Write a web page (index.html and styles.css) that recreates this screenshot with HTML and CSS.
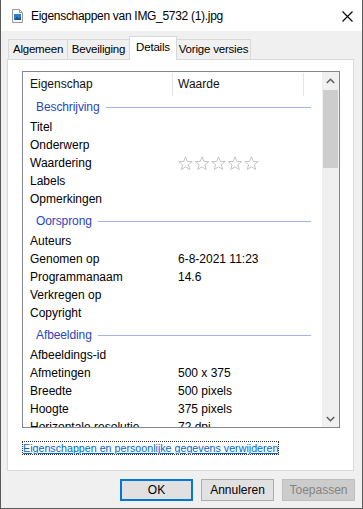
FILE: index.html
```html
<!DOCTYPE html>
<html lang="nl">
<head>
    <meta charset="UTF-8">
    <meta name="viewport" content="width=device-width, initial-scale=1.0">
    <title>Eigenschappen van IMG_5732 (1).jpg</title>
    <link rel="stylesheet" href="styles.css">
</head>
<body>
    <div class="window">
        <div class="titlebar">
            <svg class="file-icon" width="11" height="14" viewBox="0 0 11 14">
                <path d="M0.5 0.5 H7.5 L10.5 3.5 V13.5 H0.5 Z" fill="#fff" stroke="#9a9a9a"/>
                <path d="M7.5 0.5 V3.5 H10.5" fill="none" stroke="#9a9a9a"/>
                <rect x="2" y="5" width="7" height="6" fill="#2f7fd0"/>
                <path d="M2 11 L5 7.5 L7 9.5 L9 8 V11 Z" fill="#1b4f96"/>
            </svg>
            <span class="title">Eigenschappen van IMG_5732 (1).jpg</span>
            <svg class="close" width="11" height="11" viewBox="0 0 11 11">
                <path d="M0.5 0.5 L10.5 10.5 M10.5 0.5 L0.5 10.5" stroke="#000" stroke-width="1.1"/>
            </svg>
        </div>

        <div class="content">
            <div class="tabs">
                <div class="tab tab-general">Algemeen</div>
                <div class="tab tab-security">Beveiliging</div>
                <div class="tab tab-details active">Details</div>
                <div class="tab tab-versions">Vorige versies</div>
            </div>

            <div class="panel">
                <div class="list">
                    <div class="list-main">
                        <div class="list-head">
                            <div class="head-cell head-name">Eigenschap</div>
                            <div class="head-cell head-value">Waarde</div>
                        </div>

                        <div class="group"><span>Beschrijving</span></div>
                        <div class="row"><span class="name">Titel</span><span class="value"></span></div>
                        <div class="row"><span class="name">Onderwerp</span><span class="value"></span></div>
                        <div class="row">
                            <span class="name">Waardering</span>
                            <span class="value stars">
                                <svg width="84" height="15" viewBox="0 0 84 15">
                                    <defs>
                                        <path id="star" d="M7.5 0.8 L9.3 5.4 L14.2 5.6 L10.4 8.7 L11.7 13.5 L7.5 10.8 L3.3 13.5 L4.6 8.7 L0.8 5.6 L5.7 5.4 Z" fill="#fff" stroke="#c4c4c4" stroke-width="1"/>
                                    </defs>
                                    <use href="#star" x="0"/>
                                    <use href="#star" x="16.5"/>
                                    <use href="#star" x="33"/>
                                    <use href="#star" x="49.5"/>
                                    <use href="#star" x="66"/>
                                </svg>
                            </span>
                        </div>
                        <div class="row"><span class="name">Labels</span><span class="value"></span></div>
                        <div class="row"><span class="name">Opmerkingen</span><span class="value"></span></div>

                        <div class="group"><span>Oorsprong</span></div>
                        <div class="row"><span class="name">Auteurs</span><span class="value"></span></div>
                        <div class="row"><span class="name">Genomen op</span><span class="value">6-8-2021 11:23</span></div>
                        <div class="row"><span class="name">Programmanaam</span><span class="value">14.6</span></div>
                        <div class="row"><span class="name">Verkregen op</span><span class="value"></span></div>
                        <div class="row"><span class="name">Copyright</span><span class="value"></span></div>

                        <div class="group"><span>Afbeelding</span></div>
                        <div class="row"><span class="name">Afbeeldings-id</span><span class="value"></span></div>
                        <div class="row"><span class="name">Afmetingen</span><span class="value">500 x 375</span></div>
                        <div class="row"><span class="name">Breedte</span><span class="value">500 pixels</span></div>
                        <div class="row"><span class="name">Hoogte</span><span class="value">375 pixels</span></div>
                        <div class="row"><span class="name">Horizontale resolutie</span><span class="value">72 dpi</span></div>
                    </div>

                    <div class="scrollbar">
                        <div class="scroll-btn">
                            <svg width="9" height="6" viewBox="0 0 9 6"><path d="M0.8 5 L4.5 1.3 L8.2 5" fill="none" stroke="#606060" stroke-width="1.6"/></svg>
                        </div>
                        <div class="scroll-track">
                            <div class="scroll-thumb"></div>
                        </div>
                        <div class="scroll-btn">
                            <svg width="9" height="6" viewBox="0 0 9 6"><path d="M0.8 1 L4.5 4.7 L8.2 1" fill="none" stroke="#606060" stroke-width="1.6"/></svg>
                        </div>
                    </div>
                </div>

                <a class="remove-link" href="#">Eigenschappen en persoonlijke gegevens verwijderen</a>
            </div>

            <div class="buttons">
                <button class="btn default">OK</button>
                <button class="btn">Annuleren</button>
                <button class="btn" disabled>Toepassen</button>
            </div>
        </div>
    </div>
</body>
</html>
```

FILE: styles.css
```css
:root {
    --face: #f0f0f0;
    --tab-border: #d9d9d9;
    --group-blue: #2a46bd;
    --group-line: #a2b5e8;
}

* {
    margin: 0;
    padding: 0;
    box-sizing: border-box;
    font-family: 'Liberation Sans', Arial, sans-serif;
}

body {
    background: #fff;
    font-size: 12px;
    color: #000;
}

.window {
    width: 363px;
    height: 509px;
    border: 1px solid #5a5a5a;
    border-top: none;
    background: var(--face);
    overflow: hidden;
}

/* title bar */
.titlebar {
    height: 31px;
    background: #fff;
    display: flex;
    align-items: center;
    padding-left: 11px;
    padding-top: 1px;
}

.file-icon {
    flex: none;
    margin-right: 8px;
}

.title {
    flex: 1;
    font-size: 12px;
    letter-spacing: -0.3px;
    color: #000;
}

.close {
    flex: none;
    margin-right: 9px;
}

/* tabs */
.content {
    padding: 5px 8px 0 6px;
}

.tabs {
    display: flex;
    align-items: flex-end;
    height: 23px;
    padding-left: 1px;
    position: relative;
    z-index: 1;
}

.tab {
    height: 20px;
    line-height: 19px;
    text-align: center;
    background: var(--face);
    border: 1px solid var(--tab-border);
    border-bottom: none;
    color: #000;
    font-size: 11.5px;
    letter-spacing: -0.2px;
    white-space: nowrap;
}

.tab + .tab {
    margin-left: -1px;
}

.tab-general { width: 60px; }
.tab-security { width: 63px; }
.tab-versions { width: 75px; }

.tab.active {
    width: 48px;
    height: 24px;
    line-height: 20px;
    background: #fff;
    margin-bottom: -1px;
    position: relative;
    z-index: 2;
}

/* panel */
.panel {
    height: 412px;
    background: #fff;
    border: 1px solid var(--tab-border);
    padding: 11px 0 0 14px;
}

.list {
    width: 318px;
    height: 357px;
    border: 1px solid #828790;
    display: flex;
    overflow: hidden;
}

.list-main {
    flex: 1;
    overflow: hidden;
}

.list-head {
    display: flex;
    height: 24px;
}

.head-cell {
    border-right: 1px solid #e5e5e5;
    height: 23px;
    margin-top: 1px;
    line-height: 22px;
    color: #111;
}

.head-name {
    width: 150px;
    padding-left: 7px;
}

.head-value {
    width: 131px;
    padding-left: 5px;
}

.group {
    height: 22px;
    display: flex;
    align-items: center;
    padding: 0 11px 0 13px;
    color: var(--group-blue);
    font-size: 12px;
    letter-spacing: -0.1px;
}

.row + .group {
    height: 24px;
    padding-top: 2px;
}

.group::after {
    content: '';
    flex: 1;
    height: 1px;
    margin-left: 6px;
    margin-top: 1px;
    background: var(--group-line);
}

.row {
    display: flex;
    height: 18px;
    align-items: center;
    white-space: nowrap;
}

.name {
    width: 155px;
    padding-left: 7px;
    flex: none;
}

.value {
    flex: 1;
}

.stars svg {
    display: block;
    margin-top: 1px;
}

/* scrollbar */
.scrollbar {
    width: 17px;
    flex: none;
    background: var(--face);
    display: flex;
    flex-direction: column;
}

.scroll-btn {
    height: 17px;
    display: flex;
    align-items: center;
    justify-content: center;
}

.scroll-track {
    flex: 1;
    padding: 1px 1px 0 1px;
}

.scroll-thumb {
    height: 78px;
    background: #cdcdcd;
}

/* link */
.remove-link {
    display: inline-block;
    margin-top: 13px;
    color: #0066cc;
    text-decoration: underline;
    border: 1px dotted #333;
    line-height: 12px;
    font-size: 10.7px;
}

/* buttons */
.buttons {
    display: flex;
    justify-content: flex-end;
    gap: 8px;
    margin-top: 8px;
    margin-right: -1px;
}

.btn {
    width: 73px;
    height: 22px;
    background: #e1e1e1;
    border: 1px solid #adadad;
    font-size: 12px;
    color: #000;
}

.btn.default {
    border: 2px solid #0078d7;
}

.btn:disabled {
    background: #cccccc;
    border-color: #bfbfbf;
    color: #838383;
}
```
